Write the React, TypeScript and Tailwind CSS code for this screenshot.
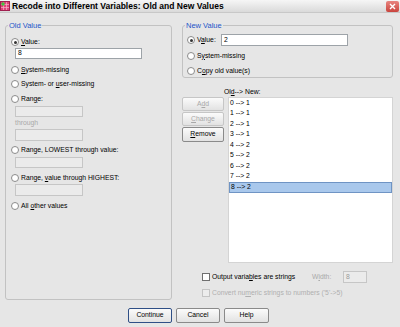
const FONT = "font-['Liberation_Sans',Arial,sans-serif]";

function Radio({ checked = false }: { checked?: boolean }) {
  return (
    <span className="w-[8px] h-[8px] rounded-full border border-[#8b8b8b] bg-white shrink-0 flex items-center justify-center">
      {checked && <span className="w-[3px] h-[3px] rounded-full bg-[#333]" />}
    </span>
  );
}

function Check({ disabled = false }: { disabled?: boolean }) {
  return (
    <span
      className={`w-[8px] h-[8px] shrink-0 border ${disabled ? "border-[#c4c4c4] bg-[#ececec]" : "border-[#6f6f6f] bg-white"}`}
    />
  );
}

function RadioRow({ children, checked = false, className = "" }: { children: React.ReactNode; checked?: boolean; className?: string }) {
  return (
    <div className={`h-[10px] flex items-center gap-[2px] ${className}`}>
      <Radio checked={checked} />
      <span className="leading-none">{children}</span>
    </div>
  );
}

function Field({ value = "", disabled = false, className = "" }: { value?: string; disabled?: boolean; className?: string }) {
  return (
    <div
      className={`border flex items-center px-[2px] leading-none ${
        disabled ? "border-[#c6c6c6] bg-[#ebebeb] text-[#9a9a9a]" : "border-[#9da3a8] bg-white text-black"
      } ${className}`}
    >
      {value}
    </div>
  );
}

function Btn({ children, disabled = false, primary = false, className = "" }: { children: React.ReactNode; disabled?: boolean; primary?: boolean; className?: string }) {
  return (
    <div
      className={`flex items-center justify-center rounded-[2px] border leading-none bg-gradient-to-b from-[#fbfbfb] to-[#e2e2e2] ${
        disabled ? "border-[#c6c6c6] text-[#a8a8a8]" : primary ? "border-[#2f4f86] text-black" : "border-[#8a8a8a] text-black"
      } ${className}`}
    >
      {children}
    </div>
  );
}

function Group({ title, className = "", children }: { title: string; className?: string; children: React.ReactNode }) {
  return (
    <div className={`relative border border-[#c2c2c2] rounded-[3px] ${className}`}>
      <span className="absolute left-[2px] -top-[5px] px-[1px] bg-[#e6e6e6] text-[#2454c8] text-[7.5px] leading-[9px]">
        {title}
      </span>
      {children}
    </div>
  );
}

const pairs = ["0 --> 1", "1 --> 1", "2 --> 1", "3 --> 1", "4 --> 2", "5 --> 2", "6 --> 2", "7 --> 2", "8 --> 2"];

export default function App() {
  return (
    <div className={`w-[400px] h-[327px] bg-[#e6e6e6] flex flex-col overflow-hidden text-[6.8px] text-black ${FONT}`}>
      {/* title bar */}
      <div className="h-[13px] flex items-center bg-gradient-to-b from-[#f6f6f6] to-[#dadada] border-b border-[#c8c8c8]">
        <svg width="10" height="10" viewBox="0 0 10 10" className="shrink-0">
          <rect x="0.5" y="0.5" width="9" height="9" fill="#e0407a" stroke="#a02050" />
          <path d="M3.5 1v8M6.5 1v8M1 3.5h8M1 6.5h8" stroke="#f6b0c8" strokeWidth="0.7" />
          <path d="M3 1.2v3.6M1.2 3h3.6" stroke="#3cc03c" strokeWidth="1.6" />
        </svg>
        <span className="ml-[2px] font-bold text-[8.5px] leading-none">
          Recode into Different Variables: Old and New Values
        </span>
        <div className="ml-auto mr-[1px] w-[13px] h-[11px] rounded-[2px] bg-gradient-to-b from-[#e88580] to-[#c9433d] flex items-center justify-center">
          <svg width="7" height="7" viewBox="0 0 7 7">
            <path d="M1 1l5 5M6 1l-5 5" stroke="white" strokeWidth="1.4" />
          </svg>
        </div>
      </div>

      <div className="flex pl-[5px] pt-[12px] gap-[10px]">
        {/* Old Value */}
        <Group title="Old Value" className="w-[167px] h-[275px] shrink-0">
          <div className="flex flex-col pl-[5px] pt-[11px]">
            <RadioRow checked>
              <u>V</u>alue:
            </RadioRow>
            <Field value="8" className="mt-[1px] ml-[4px] w-[127px] h-[11px]" />
            <RadioRow className="mt-[6px]">
              <u>S</u>ystem-missing
            </RadioRow>
            <RadioRow className="mt-[4px]">
              System- or <u>u</u>ser-missing
            </RadioRow>
            <RadioRow className="mt-[5px]">
              Ran<u>g</u>e:
            </RadioRow>
            <Field disabled className="mt-[2px] ml-[4px] w-[68px] h-[11px]" />
            <div className="mt-[2px] ml-[4px] h-[9px] flex items-center text-[#a9a9a9] leading-none">through</div>
            <Field disabled className="mt-[1px] ml-[4px] w-[68px] h-[12px]" />
            <RadioRow className="mt-[4px]">Range, LOWEST through value:</RadioRow>
            <Field disabled className="mt-[2px] ml-[4px] w-[68px] h-[11px]" />
            <RadioRow className="mt-[5px]">
              Range, <u>v</u>alue through HIGHEST:
            </RadioRow>
            <Field disabled className="mt-[1px] ml-[4px] w-[68px] h-[12px]" />
            <RadioRow className="mt-[5px]">
              All <u>o</u>ther values
            </RadioRow>
          </div>
        </Group>

        {/* right column */}
        <div className="w-[211px] flex flex-col">
          <Group title="New Value" className="h-[53px]">
            <div className="flex flex-col pl-[4px] pt-[8px]">
              <div className="h-[12px] flex items-center">
                <Radio checked />
                <span className="ml-[2px] leading-none w-[24px]">
                  V<u>a</u>lue:
                </span>
                <Field value="2" className="w-[127px] h-[12px]" />
              </div>
              <RadioRow className="mt-[5px]">
                S<u>y</u>stem-missing
              </RadioRow>
              <RadioRow className="mt-[5px]">
                C<u>o</u>py old value(s)
              </RadioRow>
            </div>
          </Group>

          <div className="flex mt-[10px]">
            <div className="w-[42px] shrink-0 flex flex-col gap-[1px] mt-[9px]">
              <Btn disabled className="h-[14px]">
                A<u>d</u>d
              </Btn>
              <Btn disabled className="h-[14px]">
                <u>C</u>hange
              </Btn>
              <Btn className="h-[15px]">
                <u>R</u>emove
              </Btn>
            </div>
            <div className="flex flex-col">
              <div className="h-[8px] flex items-center leading-none">
                Ol<u>d</u> --&gt; New:
              </div>
              <div className="mt-[1px] ml-[4px] w-[165px] h-[166px] bg-white border border-[#d4d4d4] flex flex-col">
                {pairs.map((p, i) => (
                  <div
                    key={p}
                    className={`h-[10.5px] flex items-center pl-[1px] leading-none ${
                      i === pairs.length - 1 ? "bg-[#a9c8ec] border border-[#6f94c4]" : ""
                    }`}
                  >
                    {p}
                  </div>
                ))}
              </div>
            </div>
          </div>

          <div className="mt-[8px] h-[12px] flex items-center pl-[20px]">
            <Check />
            <span className="ml-[2px] w-[100px] leading-none">
              Output varia<u>b</u>les are strings
            </span>
            <span className="w-[31px] leading-none text-[#a9a9a9]">
              W<u>i</u>dth:
            </span>
            <Field disabled value="8" className="w-[24px] h-[12px]" />
          </div>
          <div className="mt-[5px] h-[10px] flex items-center pl-[20px] text-[#b0b0b0]">
            <Check disabled />
            <span className="ml-[2px] leading-none">
              Convert nu<u>m</u>eric strings to numbers ('5'-&gt;5)
            </span>
          </div>
        </div>
      </div>

      {/* bottom buttons */}
      <div className="flex gap-[4px] pl-[128px] mt-[8px]">
        <Btn primary className="w-[44px] h-[15px]">
          Continue
        </Btn>
        <Btn className="w-[44px] h-[15px]">Cancel</Btn>
        <Btn className="w-[45px] h-[15px]">Help</Btn>
      </div>
    </div>
  );
}
